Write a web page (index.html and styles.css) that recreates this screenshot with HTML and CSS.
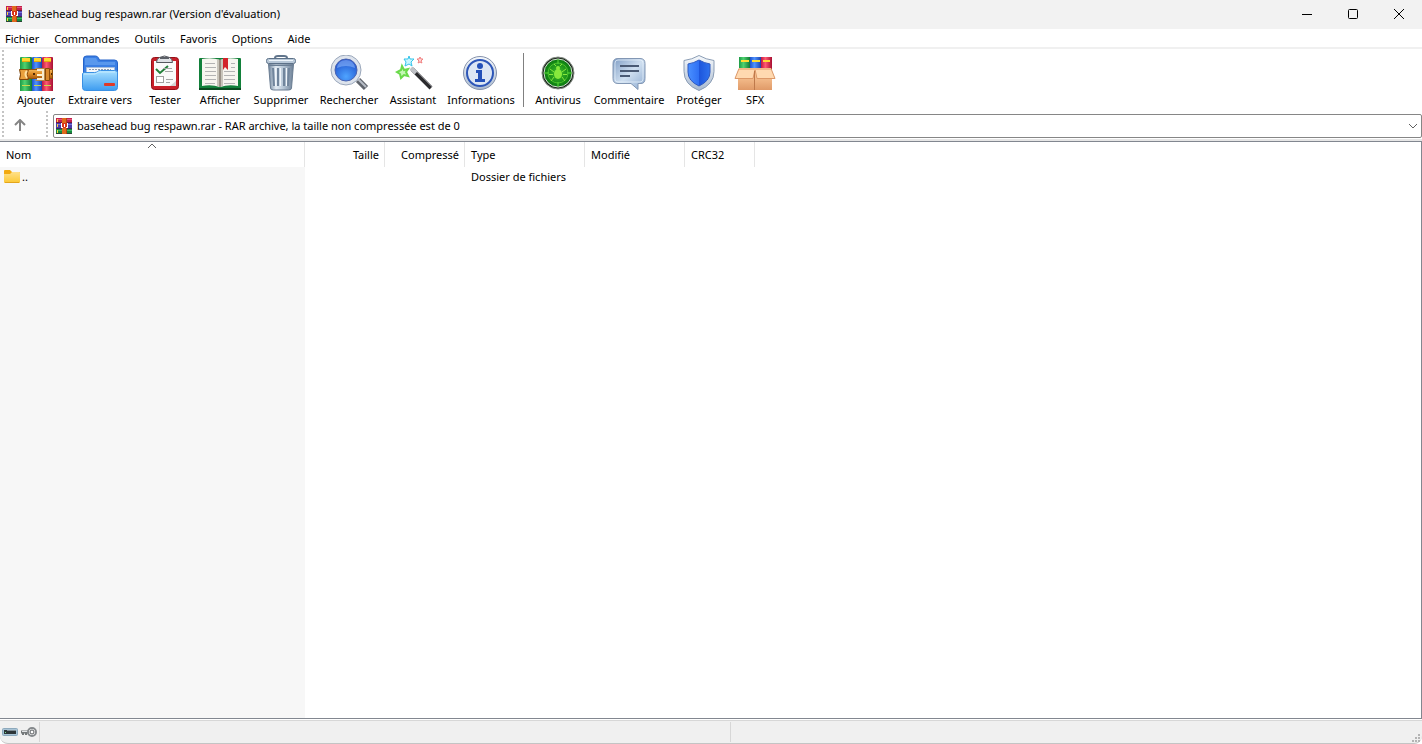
FILE: index.html
```
<!DOCTYPE html>
<html lang="fr">
<head>
  <meta charset="UTF-8" />
  <meta name="viewport" content="width=device-width, initial-scale=1.0"/>
  <title>basehead bug respawn.rar (Version d'évaluation)</title>
  <link rel="stylesheet" href="styles.css">
</head>
<body>
  <svg class="defs" aria-hidden="true">
    <defs>
      <linearGradient id="gGreen"><stop offset="0" stop-color="#1d9a45"/><stop offset=".4" stop-color="#4fd26f"/><stop offset="1" stop-color="#0f7a35"/></linearGradient>
      <linearGradient id="gBlue"><stop offset="0" stop-color="#1c50c8"/><stop offset=".4" stop-color="#4f92ff"/><stop offset="1" stop-color="#1b43ac"/></linearGradient>
      <linearGradient id="gRed"><stop offset="0" stop-color="#c01840"/><stop offset=".4" stop-color="#ff5a72"/><stop offset="1" stop-color="#a80f32"/></linearGradient>
      <linearGradient id="gBelt" x2="0" y2="1"><stop offset="0" stop-color="#f6b95a"/><stop offset=".5" stop-color="#dd8a25"/><stop offset="1" stop-color="#a85a10"/></linearGradient>
      <linearGradient id="gFolder" x2="0" y2="1"><stop offset="0" stop-color="#a8e0ff"/><stop offset="1" stop-color="#3d9cf0"/></linearGradient>
      <linearGradient id="gMetal"><stop offset="0" stop-color="#6f849b"/><stop offset=".3" stop-color="#e2ebf3"/><stop offset=".6" stop-color="#b5c5d5"/><stop offset="1" stop-color="#6d8096"/></linearGradient>
      <linearGradient id="gSilver" x2="0" y2="1"><stop offset="0" stop-color="#f6f9fc"/><stop offset="1" stop-color="#a9bad0"/></linearGradient>
      <linearGradient id="gBubble" x2="1" y2="1"><stop offset="0" stop-color="#7e9cc4"/><stop offset=".5" stop-color="#cfdff0"/><stop offset="1" stop-color="#8eabd0"/></linearGradient>
      <linearGradient id="gYellow" x2="0" y2="1"><stop offset="0" stop-color="#ffe08a"/><stop offset="1" stop-color="#fcc832"/></linearGradient>
      <linearGradient id="gBox" x2="0" y2="1"><stop offset="0" stop-color="#ffd0a0"/><stop offset="1" stop-color="#e09a68"/></linearGradient>
      <radialGradient id="gLens" cx=".5" cy=".75" r=".7"><stop offset="0" stop-color="#4fa4ff"/><stop offset="1" stop-color="#1a49c8"/></radialGradient>
      <radialGradient id="gRadar"><stop offset="0" stop-color="#3fc02c"/><stop offset="1" stop-color="#0a7a10"/></radialGradient>
      <linearGradient id="gShield"><stop offset="0" stop-color="#4a90ff"/><stop offset=".5" stop-color="#2f70f4"/><stop offset=".5" stop-color="#1d55dc"/><stop offset="1" stop-color="#2f72ee"/></linearGradient>
    </defs>
    <symbol id="rar" viewBox="0 0 16 16">
      <path fill="#c4204c" d="M0 0h16v5H0z"/>
      <path fill="#4a3da8" d="M0 5h16v6H0z"/>
      <path fill="#168a3e" d="M0 11h16v5H0z"/>
      <path fill="#e2567a" d="M2 1h14v1H2z"/>
      <path fill="#7a74d8" d="M2 6h14v1H2z"/>
      <path fill="#3fb766" d="M2 12h14v1H2z"/>
      <path fill="#3a1730" d="M0 4h16v1H0zM0 10h16v1H0zM0 15h16v1H0z" opacity=".6"/>
      <path fill="#ffd23a" d="M1 1h1v3H1zM1 6h1v3H1zM1 12h1v3H1z"/>
      <path fill="#e06a1c" d="M6 0h4v16H6z"/>
      <path fill="#b7430e" d="M10 0h1v16h-1z"/>
      <path fill="#d83418" d="M6 5h5v5H6z"/>
      <path fill="#fff" d="M5 5h1v4h1v1H5zM11 5h1v5h-2V9h1zM8 6h1v3H8z"/>
    </symbol>
  </svg>

  <div class="window">
    <header class="titlebar">
      <svg class="app-icon" aria-hidden="true"><use href="#rar"/></svg>
      <h1 class="title">basehead bug respawn.rar (Version d'évaluation)</h1>
      <div class="window-buttons">
        <button class="win-btn" aria-label="Réduire"><svg width="12" height="12"><path d="M1 6.500h10"/></svg></button>
        <button class="win-btn" aria-label="Agrandir"><svg width="12" height="12"><rect x="1.500" y="1.500" width="9" height="9" rx="1"/></svg></button>
        <button class="win-btn" aria-label="Fermer"><svg width="12" height="12"><path d="M1 1l10 10M11 1L1 11"/></svg></button>
      </div>
    </header>

    <nav class="menubar">
      <button class="menu-item">Fichier</button>
      <button class="menu-item">Commandes</button>
      <button class="menu-item">Outils</button>
      <button class="menu-item">Favoris</button>
      <button class="menu-item">Options</button>
      <button class="menu-item">Aide</button>
    </nav>

    <div class="toolbar">
      <span class="grip"></span>
      <div class="tools tools-main">
        <button class="tool">
          <svg viewBox="0 -1 42 36" aria-hidden="true">
            <path fill="url(#gGreen)" d="M6 1h10q1 0 1 1v33H5V2q0-1 1-1z"/>
            <path fill="url(#gBlue)" d="M18 1h8q1 0 1 1v33H17V2q0-1 1-1z"/>
            <path fill="url(#gRed)" d="M28 1h9q1 0 1 1v33H27V2q0-1 1-1z"/>
            <path fill="#ffd92e" d="M7 2h8v4H7zM19 2h7v4h-7zM29 2h7v4h-7z"/>
            <path fill="#e8a90c" d="M7 5h8v1H7zM19 5h7v1h-7zM29 5h7v1h-7z"/>
            <path fill="#c9d84a" d="M7 29h8v1H7zM19 29h7v1h-7zM29 29h7v1h-7z"/>
            <path fill="url(#gBelt)" stroke="#8f4f0c" d="M5.500 13.500h32v9h-32z"/>
            <path fill="#e9a03c" stroke="#7e450a" d="M4.500 13.500h9q-3 5 0 10h-9q2-5 0-10z"/>
            <path fill="none" stroke="#ffe0a0" stroke-width="2" d="M12 15q-3 3 0 7"/>
            <path fill="#d98a2c" stroke="#8a4a0a" d="M30.500 12.500h4v12h-4z"/>
            <path fill="none" stroke="#f7ecd0" stroke-width="2" d="M22 14h6v9h-6"/>
            <path fill="none" stroke="#b58a48" d="M20.500 12.500h9v12h-9"/>
            <path fill="#fff3cf" d="M22 18h5v2h-5z"/>
            <path fill="#542b05" d="M18 17h2v2h-2zM36 17h1v2h-1z"/>
          </svg>
          <span>Ajouter</span>
        </button>
        <button class="tool">
          <svg viewBox="0 0 42 36" aria-hidden="true">
            <path fill="#3b7fe4" stroke="#2563c8" d="M4.500 4q0-3 3-3h9q2 0 3 2l1 2h15q3 0 3 3v20h-34z"/>
            <path fill="#6ea8f4" d="M6 3h11l2 4h17v3H6z" opacity=".6"/>
            <path fill="#f5f8fc" stroke="#a8bfdc" d="M7.500 12.500h28v10h-28z"/>
            <path stroke="#8e9aac" stroke-dasharray="2 1" d="M10 14.500h22"/>
            <path fill="url(#gFolder)" stroke="#3a90e4" d="M3.500 18.500q1-1 2-1h10q2 0 3-1t3-1h14q3 0 3 2v15q0 3-3 3h-29q-3 0-3-3z"/>
            <path fill="none" stroke="#c6ebff" d="M5 19h11l4-2h16"/>
            <rect x="25" y="28" width="11" height="3" rx="1" fill="#e03a28"/>
          </svg>
          <span>Extraire vers</span>
        </button>
        <button class="tool">
          <svg viewBox="0 0 42 36" aria-hidden="true">
            <rect x="7.500" y="2.500" width="27" height="32" rx="3" fill="#c8202a" stroke="#951017"/>
            <path fill="#fafafa" d="M10 6h22v25H10z"/>
            <path fill="#d4d4d4" d="M32 26v5h-6z"/>
            <path fill="#dfe2e6" stroke="#55585e" d="M12.500 7.500q0-4 3-5 5-3 10 0 3 1 3 5z"/>
            <path fill="#5b5f66" d="M16 2h9v2h-9z"/>
            <path fill="none" stroke="#23803a" stroke-width="2" d="M12 14l4 4 8-7"/>
            <path stroke="#a6a6a6" d="M21 16.500h8M22 24.500h7M22 27.500h4M19 13.500h9"/>
            <rect x="12.500" y="21.500" width="7" height="6" fill="#fff" stroke="#a0a0a0"/>
          </svg>
          <span>Tester</span>
        </button>
        <button class="tool">
          <svg viewBox="0 0 42 36" aria-hidden="true">
            <rect x="0" y="3" width="42" height="32" rx="1" fill="#12803a"/>
            <path fill="#0b4a20" d="M0 33h42v2H0z"/>
            <path fill="#f7f5ef" d="M3 4q10-2 18 1v27q-9-3-18-1zM39 4q-10-2-18 1v27q9-3 18-1z"/>
            <path fill="#c9c5bb" d="M18 4l3 1 3-1v27l-3 1-3-1z"/>
            <path stroke="#6b5d50" d="M21 5v27"/>
            <path fill="none" stroke="#b3b3b3" d="M6 8.500h10M6 12.500h11M6 16.500h11M6 20.500h11M6 24.500h11M6 28.500h10M25 16.500h11M25 20.500h11M25 24.500h11M25 28.500h11M32 8.500h4M32 12.500h4"/>
            <path fill="#d2222a" d="M24 3h5v12l-3-3-2 3z"/>
          </svg>
          <span>Afficher</span>
        </button>
        <button class="tool">
          <svg viewBox="0 0 42 36" aria-hidden="true">
            <path fill="none" stroke="#61758c" stroke-width="2" d="M15 3q0-2 3-2h6q3 0 3 2"/>
            <path fill="url(#gMetal)" stroke="#6a7d92" d="M8.500 9h25l-2 24q0 2-3 2h-15q-3 0-3-2z"/>
            <path stroke="#71859c" stroke-width="2" d="M13 13l1 18M18 13v18M24 13v18M29 13l-1 18"/>
            <path stroke="#f0f5fa" d="M15.500 13v18M20.500 13v18M26.500 13v18"/>
            <rect x="6.500" y="3.500" width="29" height="5" rx="2" fill="#b7c7d7" stroke="#5c7188"/>
            <path stroke="#eef5fb" d="M9 5.500h24"/>
            <path stroke="#6c8096" d="M9 10.500h24"/>
          </svg>
          <span>Supprimer</span>
        </button>
        <button class="tool">
          <svg viewBox="0 0 42 36" aria-hidden="true">
            <path stroke="#60656d" stroke-width="6" d="M30 25l8 8"/>
            <path stroke="#b8bec8" stroke-width="2" d="M30 24l8 8"/>
            <circle cx="18" cy="15" r="13" fill="url(#gLens)" stroke="#dde3ec" stroke-width="4"/>
            <circle cx="18" cy="15" r="15" fill="none" stroke="#9aa7bb"/>
            <circle cx="18" cy="15" r="11" fill="none" stroke="#4a63b0"/>
            <path fill="#9bc4ff" opacity=".5" d="M9 13q1-8 9-8t9 8q-9-4-18 0z"/>
          </svg>
          <span>Rechercher</span>
        </button>
        <button class="tool">
          <svg viewBox="0 0 42 36" aria-hidden="true">
            <path stroke="#2b2b2e" stroke-width="4" d="M20 14l19 19"/>
            <path stroke="#77777c" stroke-width="1" d="M21 13l19 19"/>
            <path stroke="#bfc1c6" stroke-width="4" d="M19 13l5 5"/>
            <path fill="#c4f8b4" stroke="#6ada4a" stroke-width="2" d="M10 11l2 4 4-1-2 3 2 4-4-1-3 3-1-4-3-2 4-2z"/>
            <path fill="#c8f6ff" stroke="#35c4ea" stroke-width="1" d="M17 1l1 3 4 0-3 3 1 4-3-2-4 2 1-4-2-3h4z"/>
            <path fill="#ffd4d4" stroke="#f08080" d="M28 2l1 2h2l-2 2 1 2-2-1-2 1 1-2-2-2h2z"/>
          </svg>
          <span>Assistant</span>
        </button>
        <button class="tool">
          <svg viewBox="0 0 42 36" aria-hidden="true">
            <circle cx="20" cy="18" r="16.500" fill="url(#gSilver)" stroke="#8592ac"/>
            <circle cx="20" cy="18" r="13" fill="#dce6f4" stroke="#2d56b8" stroke-width="2"/>
            <circle cx="20" cy="11" r="3" fill="#2350b8"/>
            <path fill="#2350b8" d="M16 15h6v9h3v3H15v-3h3v-6h-2z"/>
          </svg>
          <span>Informations</span>
        </button>
      </div>
      <span class="tool-separator"></span>
      <div class="tools tools-extra">
        <button class="tool">
          <svg viewBox="0 0 42 36" aria-hidden="true">
            <circle cx="21" cy="18" r="16" fill="#1c2a1c" stroke="#8a8f8a"/>
            <circle cx="21" cy="18" r="14" fill="url(#gRadar)" stroke="#d2dcd2"/>
            <circle cx="21" cy="18" r="10" fill="none" stroke="#48c02c"/>
            <path stroke="#58d838" d="M21 4v5M21 27v5M7 18h5M30 18h5"/>
            <ellipse cx="21" cy="19" rx="4" ry="5" fill="#86e83c"/>
            <circle cx="21" cy="13" r="2" fill="#86e83c"/>
            <path fill="none" stroke="#86e83c" d="M17 17l-4-3M25 17l4-3M16 19.500h-4M26 19.500h4M17 22l-3 4M25 22l3 4M19 11l-2-2M23 11l2-2"/>
          </svg>
          <span>Antivirus</span>
        </button>
        <button class="tool">
          <svg viewBox="0 0 42 36" aria-hidden="true">
            <path fill="url(#gBubble)" stroke="#8297b4" d="M10 3.500h22q5 0 5 5v15q0 5-4 5l-3 0v6l-7-6H10q-5 0-5-5v-15q0-5 5-5z"/>
            <path fill="none" stroke="#eaf3fc" d="M10 5h22q3 0 3 3v16q0 3-3 3H10q-3 0-3-3V8q0-3 3-3z" opacity=".7"/>
            <path stroke="#4a5a74" stroke-width="2" d="M12 11h19M12 16h19M12 21h10"/>
          </svg>
          <span>Commentaire</span>
        </button>
        <button class="tool">
          <svg viewBox="0 0 42 36" aria-hidden="true">
            <path fill="url(#gSilver)" stroke="#8b9db5" d="M21 .500q7 4 15 5v11q0 13-15 19-15-6-15-19v-11q8-1 15-5z"/>
            <path fill="url(#gShield)" stroke="#2c58c0" d="M21 5q5 3 11 4v8q0 9-11 14-11-5-11-14V9q6-1 11-4z"/>
          </svg>
          <span>Protéger</span>
        </button>
        <button class="tool">
          <svg viewBox="0 -1 42 36" aria-hidden="true">
            <path fill="url(#gGreen)" d="M5 1h11v13H5z"/>
            <path fill="url(#gBlue)" d="M16 1h11v13H16z"/>
            <path fill="url(#gRed)" d="M27 1h11v13H27z"/>
            <path fill="#ffdc30" d="M7 4h8v2H7zM18 4h8v2h-8zM29 4h7v2h-7z"/>
            <path fill="url(#gBox)" d="M4 15h34v19H4z"/>
            <path fill="#ffd9b0" stroke="#dc9868" d="M5 12.500h32l4 10H23l-2-9-2 9H1z"/>
            <path fill="#f2b886" d="M5 12h32v2H5z"/>
            <path stroke="#be794b" d="M20.500 15v19"/>
          </svg>
          <span>SFX</span>
        </button>
      </div>
    </div>

    <div class="addressbar">
      <span class="grip"></span>
      <button class="up" aria-label="Dossier parent"><svg width="12" height="13"><path d="M6 12V2M1 6l5-5 5 5"/></svg></button>
      <span class="grip"></span>
      <div class="address">
        <svg class="app-icon" aria-hidden="true"><use href="#rar"/></svg>
        <select class="address-select" aria-label="Adresse">
          <option>basehead bug respawn.rar - RAR archive, la taille non compressée est de 0</option>
        </select>
        <svg class="chevron" width="10" height="6" aria-hidden="true"><path d="M1 1l4 4 4-4"/></svg>
      </div>
    </div>

    <main class="file-list">
      <table class="files">
        <colgroup>
          <col class="col-name"><col class="col-size"><col class="col-size"><col class="col-type"><col class="col-date"><col class="col-crc"><col>
        </colgroup>
        <thead>
          <tr>
            <th class="sorted">Nom<svg class="sort-arrow" width="10" height="6" aria-hidden="true"><path d="M1 5l4-4 4 4"/></svg></th>
            <th class="num">Taille</th>
            <th class="num">Compressé</th>
            <th>Type</th>
            <th>Modifié</th>
            <th>CRC32</th>
            <td></td>
          </tr>
        </thead>
        <tbody>
          <tr>
            <td class="name">
              <svg class="folder" viewBox="0 0 16 14" aria-hidden="true">
                <path fill="#f2a90f" d="M0 1q0-1 1-1h5l2 2h7q1 0 1 1v4H0z"/>
                <path fill="url(#gYellow)" d="M0 4h6l2-2h7q1 0 1 1v9q0 1-1 1H1q-1 0-1-1z"/>
                <path fill="#e3a51c" d="M1 12h14v1H1z"/>
              </svg>
              <span>..</span>
            </td>
            <td></td>
            <td></td>
            <td>Dossier de fichiers</td>
            <td></td>
            <td></td>
            <td></td>
          </tr>
        </tbody>
      </table>
      <div class="name-fill"></div>
    </main>

    <footer class="statusbar">
      <div class="status-icons">
        <svg width="16" height="10" aria-hidden="true">
          <rect x=".500" y="1.500" width="15" height="7" rx="1" fill="#a9c4d6" stroke="#8da9bc"/>
          <path fill="#2d3538" d="M2 3h12v4H2z"/>
          <path fill="#7f8d94" d="M5 3h9v1H5z"/>
          <path fill="#7ce08a" d="M3 5h1v1H3z"/>
        </svg>
        <svg width="16" height="12" aria-hidden="true">
          <path fill="none" stroke="#74787a" stroke-width="3" d="M0 6h8"/>
          <path fill="#74787a" d="M1 7h2v2H1zM4 7h2v2H4z"/>
          <path stroke="#e2e4e6" d="M1 5.500h7"/>
          <circle cx="11" cy="6" r="4" fill="#fff" stroke="#85898c" stroke-width="2"/>
          <circle cx="11" cy="6" r="2" fill="#fff" stroke="#55595c"/>
        </svg>
      </div>
      <div class="status-cell"></div>
      <div class="status-cell">
        <svg class="resize" width="8" height="8" aria-hidden="true">
          <path fill="#b4b4b4" d="M6 0h2v2H6zM3 3h2v2H3zM6 3h2v2H6zM0 6h2v2H0zM3 6h2v2H3zM6 6h2v2H6z"/>
        </svg>
      </div>
    </footer>
  </div>
</body>
</html>
```

FILE: styles.css
```
* {
  box-sizing: border-box;
  margin: 0;
  padding: 0;
}

body {
  background: #fff;
  color: #000;
  font-family: 'Noto Sans', 'Open Sans', sans-serif;
  font-size: 11px;
  line-height: 16px;
}

button,
select {
  border: none;
  background: transparent;
  color: inherit;
  font: inherit;
}

svg {
  display: block;
  flex-shrink: 0;
}

.defs {
  position: absolute;
  width: 0;
  height: 0;
}

.window {
  display: flex;
  flex-direction: column;
  height: 100vh;
  overflow: hidden;
}

.app-icon {
  width: 16px;
  height: 16px;
}

/* title bar */
.titlebar {
  display: flex;
  align-items: center;
  gap: 6px;
  height: 29px;
  padding-left: 6px;
  padding-bottom: 2px;
  background: #f2f2f2;
}

.title {
  flex: 1;
  font-size: 11px;
  font-weight: normal;
}

.window-buttons {
  display: flex;
}

.win-btn {
  display: flex;
  align-items: center;
  justify-content: center;
  width: 46px;
  height: 27px;
}

.win-btn path,
.win-btn rect {
  fill: none;
  stroke: #000;
}

/* menu */
.menubar {
  display: flex;
  height: 20px;
  padding-top: 2px;
  border-bottom: 2px solid #f0f0f0;
}

.menu-item {
  padding: 0 10px 0 5px;
  line-height: 16px;
}

/* toolbar */
.toolbar {
  display: flex;
  align-items: center;
  height: 61px;
  padding-left: 2px;
}

.grip {
  align-self: stretch;
  width: 2px;
  margin-top: 1px;
  background: repeating-linear-gradient(#c4c4c4 0 2px, transparent 2px 4px);
}

.tools {
  display: grid;
  padding-top: 3px;
}

.tools-main {
  grid-template-columns: 52px 76px 54px 56px 66px 70px 58px 78px;
  margin-left: 6px;
}

.tools-extra {
  grid-template-columns: 60px 82px 58px 54px;
  margin-left: 4px;
}

.tool {
  display: flex;
  flex-direction: column;
  align-items: center;
  gap: 1px;
  white-space: nowrap;
}

.tool svg {
  width: 42px;
  height: 36px;
}

.tool-separator {
  width: 1px;
  height: 54px;
  margin-left: 3px;
  background: #808080;
}

/* address bar */
.addressbar {
  display: flex;
  align-items: center;
  height: 31px;
  padding-left: 2px;
  border-bottom: 2px solid #e6e6e6;
}

.up {
  display: flex;
  justify-content: center;
  width: 42px;
  padding-top: 2px;
  padding-right: 10px;
}

.up path {
  fill: none;
  stroke: #858585;
  stroke-width: 2;
}

.address {
  display: flex;
  flex: 1;
  align-items: center;
  gap: 5px;
  height: 24px;
  margin-top: 3px;
  margin-left: 5px;
  padding: 0 3px 0 2px;
  border: 1px solid #868686;
  border-radius: 2px;
}

.address-select {
  flex: 1;
  appearance: none;
  outline: none;
}

.chevron path,
.sort-arrow path {
  fill: none;
  stroke: #606060;
}

/* file list */
.file-list {
  display: flex;
  flex: 1;
  flex-direction: column;
  border: 1px solid #828790;
  border-left: none;
}

.files {
  width: 100%;
  border-spacing: 0;
  table-layout: fixed;
}

.col-name {
  width: 305px;
}

.col-size {
  width: 80px;
}

.col-type {
  width: 120px;
}

.col-date {
  width: 100px;
}

.col-crc {
  width: 70px;
}

.files th {
  height: 25px;
  padding: 0 5px 0 6px;
  border-right: 1px solid #e5e5e5;
  font-weight: normal;
  text-align: left;
}

.files .num {
  text-align: right;
}

.sorted {
  position: relative;
}

.sort-arrow {
  position: absolute;
  top: 1px;
  left: 50%;
  margin-left: -5px;
}

.files tbody td {
  height: 20px;
  padding-left: 6px;
}

.files .name {
  display: flex;
  align-items: center;
  gap: 2px;
  padding-left: 4px;
  background: #f7f7f7;
}

.folder {
  width: 16px;
  height: 14px;
}

.name-fill {
  flex: 1;
  width: 305px;
  background: #f7f7f7;
}

/* status bar */
.statusbar {
  display: flex;
  align-items: center;
  height: 24px;
  margin-top: 1px;
  border-top: 1px solid #d7d7d7;
  border-bottom: 1px solid #c4c4c4;
  border-radius: 0 0 8px 8px;
  background: #f0f0f0;
}

.status-icons {
  display: flex;
  align-items: center;
  gap: 3px;
  width: 40px;
  height: 20px;
  padding-left: 2px;
  border-right: 1px solid #d7d7d7;
}

.status-cell {
  display: flex;
  flex: 1;
  align-items: flex-end;
  justify-content: flex-end;
  height: 20px;
}

.status-cell + .status-cell {
  padding-right: 2px;
  border-left: 1px solid #d7d7d7;
}
```
